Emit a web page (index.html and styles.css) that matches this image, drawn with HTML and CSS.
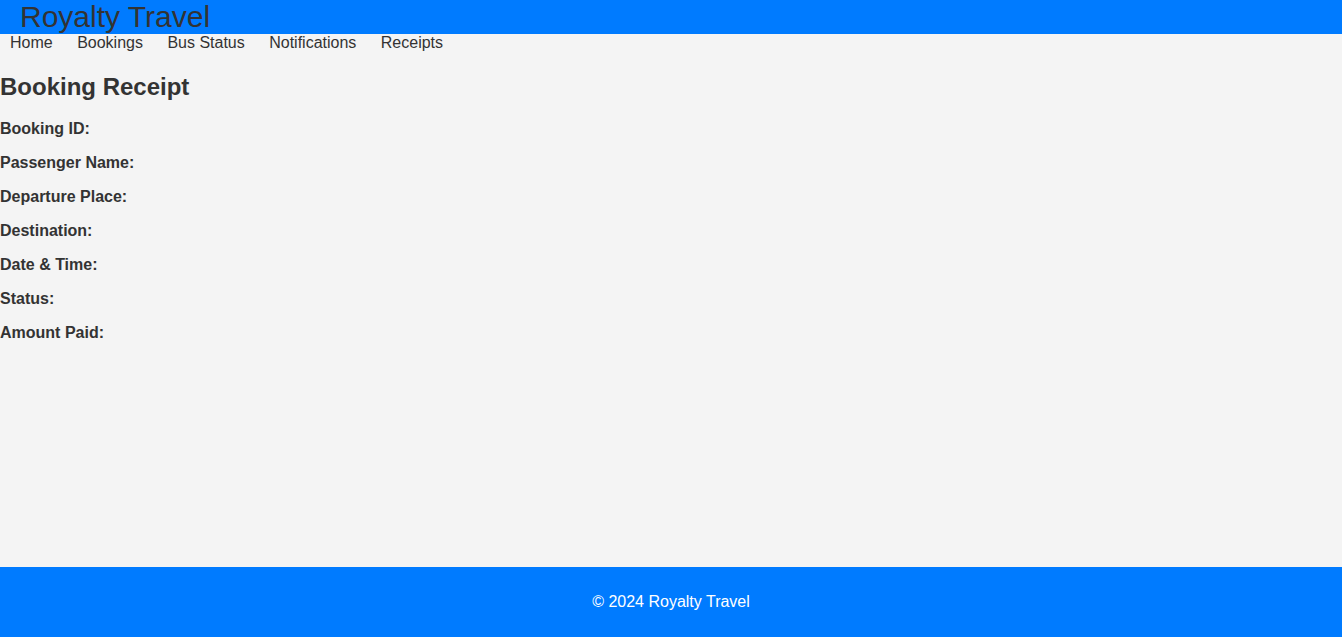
FILE: index.html
```html
<!DOCTYPE html>
<html lang="en">
<head>
<meta charset="utf-8">
<title>Booking Receipt - Royalty Travel</title>
<link rel="stylesheet" href="styles.css">
</head>
<body>
<header class="site-header">
  <h1 class="brand">Royalty Travel</h1>
</header>
<nav class="site-nav">
  <a href="#">Home</a>
  <a href="#">Bookings</a>
  <a href="#">Bus Status</a>
  <a href="#">Notifications</a>
  <a href="#">Receipts</a>
</nav>
<main class="content">
  <h2 class="title">Booking Receipt</h2>
  <p class="field"><strong>Booking ID:</strong></p>
  <p class="field"><strong>Passenger Name:</strong></p>
  <p class="field"><strong>Departure Place:</strong></p>
  <p class="field"><strong>Destination:</strong></p>
  <p class="field"><strong>Date &amp; Time:</strong></p>
  <p class="field"><strong>Status:</strong></p>
  <p class="field"><strong>Amount Paid:</strong></p>
</main>
<footer class="site-footer">
  <p class="copy">&copy; 2024 Royalty Travel</p>
</footer>
</body>
</html>
```
FILE: styles.css
```css
html, body {
  margin: 0;
  padding: 0;
}
body {
  font-family: "Liberation Sans", Arial, sans-serif;
  font-size: 16px;
  color: #333;
  background: #f4f4f4;
  min-height: 100vh;
  display: flex;
  flex-direction: column;
}
.site-header {
  background: #007bff;
  padding: 0 20px;
  height: 34px;
}
.brand {
  margin: 0;
  font-size: 30px;
  font-weight: normal;
  line-height: 34px;
  color: #333;
}
.site-nav {
  display: flex;
  gap: 4.45px;
  line-height: 18px;
}
.site-nav a {
  color: #333;
  text-decoration: none;
  padding: 0 10px;
}
.content {
  flex: 1;
}
.title {
  font-size: 24px;
  margin: 21px 0 19px;
  line-height: 28px;
}
.field {
  margin: 16px 0;
  line-height: 18px;
}
.site-footer {
  background: #007bff;
  color: #fff;
  text-align: center;
  padding: 26px 0;
}
.copy {
  margin: 0;
  line-height: 18px;
}
```
